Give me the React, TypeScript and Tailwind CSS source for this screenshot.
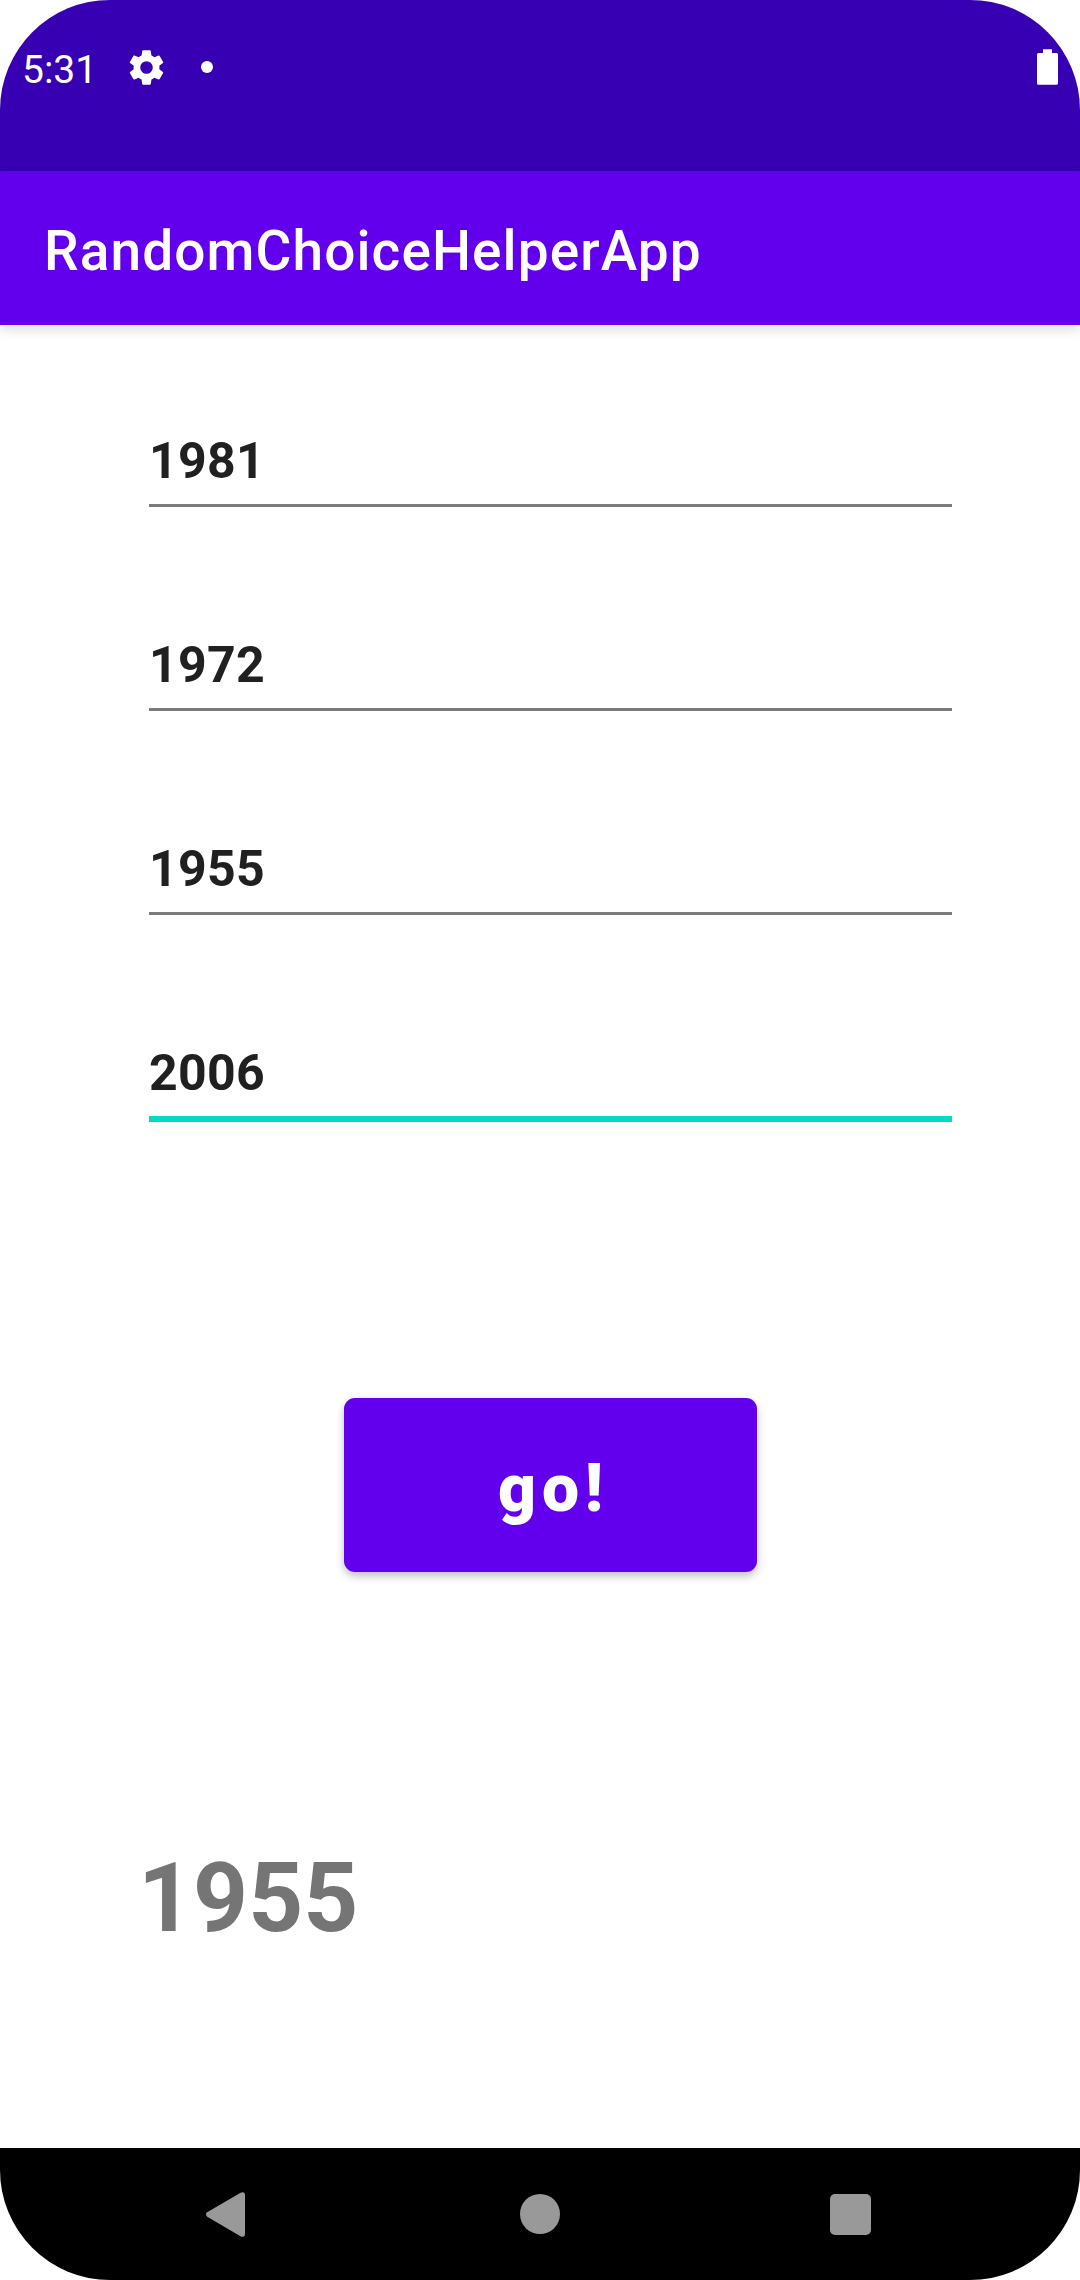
import React from "react";

function Field({ value, focused = false }: { value: string; focused?: boolean }) {
  return (
    <div className="h-[204px]">
      <div className="flex h-[112px] items-end">
        <input
          readOnly
          value={value}
          className={
            "block w-full bg-transparent pb-[2px] text-[50px] font-bold tracking-[0.3px] text-[#202020] outline-none " +
            (focused ? "h-[90px] border-b-[6px] border-[#03dac5]" : "mb-[3px] h-[87px] border-b-[3px] border-[#7b7b7b]")
          }
        />
      </div>
    </div>
  );
}

export default function App() {
  return (
    <div className="flex h-[2280px] w-[1080px] flex-col overflow-hidden rounded-[110px] bg-white font-['Roboto',sans-serif]">
      <header className="flex h-[171px] shrink-0 items-start bg-[#3700b3] px-[22px] text-white">
        <span className="mt-[47px] w-[103px] text-[39px] leading-[46px]">5:31</span>
        <svg viewBox="0 0 24 24" className="mt-[46px] h-[43px] w-[43px]" fill="currentColor">
          <path d="M19.14 12.94c.04-.3.06-.61.06-.94 0-.32-.02-.64-.07-.94l2.03-1.58a.49.49 0 0 0 .12-.61l-1.92-3.32a.488.488 0 0 0-.59-.22l-2.39.96c-.5-.38-1.03-.7-1.62-.94l-.36-2.54a.484.484 0 0 0-.48-.41h-3.84c-.24 0-.43.17-.47.41l-.36 2.54c-.59.24-1.13.57-1.62.94l-2.39-.96c-.22-.08-.47 0-.59.22L2.74 8.87c-.12.21-.08.47.12.61l2.03 1.58c-.05.3-.09.63-.09.94s.02.64.07.94l-2.03 1.58a.49.49 0 0 0-.12.61l1.92 3.32c.12.22.37.29.59.22l2.39-.96c.5.38 1.03.7 1.62.94l.36 2.54c.05.24.24.41.48.41h3.84c.24 0 .44-.17.47-.41l.36-2.54c.59-.24 1.13-.56 1.62-.94l2.39.96c.22.08.47 0 .59-.22l1.92-3.32c.12-.22.07-.47-.12-.61l-2.01-1.58zM12 15.5A3.5 3.5 0 1 1 12 8.5a3.5 3.5 0 0 1 0 7z" />
        </svg>
        <span className="mt-[61px] ml-[33px] h-[12px] w-[12px] rounded-full bg-white" />
        <svg viewBox="0 0 21 36" className="mt-[49px] ml-auto h-[36px] w-[21px]" fill="currentColor">
          <path d="M6 .3h9V4h4.500Q21 4 21 5.500v28.700q0 1.500-1.500 1.500h-18Q0 35.700 0 34.200V5.500Q0 4 1.500 4H6z" />
        </svg>
      </header>
      <div className="z-10 flex h-[154px] shrink-0 items-center bg-[#6200ee] px-[44px] text-[55px] font-medium tracking-[1.09px] text-white shadow-[0_4px_12px_rgba(0,0,0,0.15)]">
        <h1 className="mt-[6px]">RandomChoiceHelperApp</h1>
      </div>
      <main className="flex grow flex-col px-[149px] pt-[73px]">
        <div className="w-[803px]">
          <Field value="1981" />
          <Field value="1972" />
          <Field value="1955" />
          <Field value="2006" focused />
        </div>
        <button className="mt-[184px] ml-[195px] h-[174px] w-[413px] rounded-[11px] bg-[#6200ee] pt-[7px] pl-[6px] text-[66px] font-black tracking-[5.9px] text-white shadow-[0_4px_8px_rgba(0,0,0,0.25)]">
          go!
        </button>
        <p className="mt-[270px] -ml-[11px] text-[96px] leading-[112px] font-bold text-[#757575]">1955</p>
      </main>
      <nav className="grid h-[132px] shrink-0 grid-cols-3 items-start bg-black px-[72px] text-[#999999]">
        <svg viewBox="0 0 39 45" className="mt-[44px] ml-[134px] h-[45px] w-[39px]" fill="currentColor">
          <path d="M34.500.8Q39-1.200 39 3.500v38q0 4.700-4.500 2.700L1.200 24.700q-2.400-2.200 0-4.400z" />
        </svg>
        <span className="mt-[46px] h-[40px] w-[40px] justify-self-center rounded-full bg-[#999999]" />
        <span className="mt-[46px] ml-[134px] h-[41px] w-[41px] rounded-[5px] bg-[#999999]" />
      </nav>
    </div>
  );
}
